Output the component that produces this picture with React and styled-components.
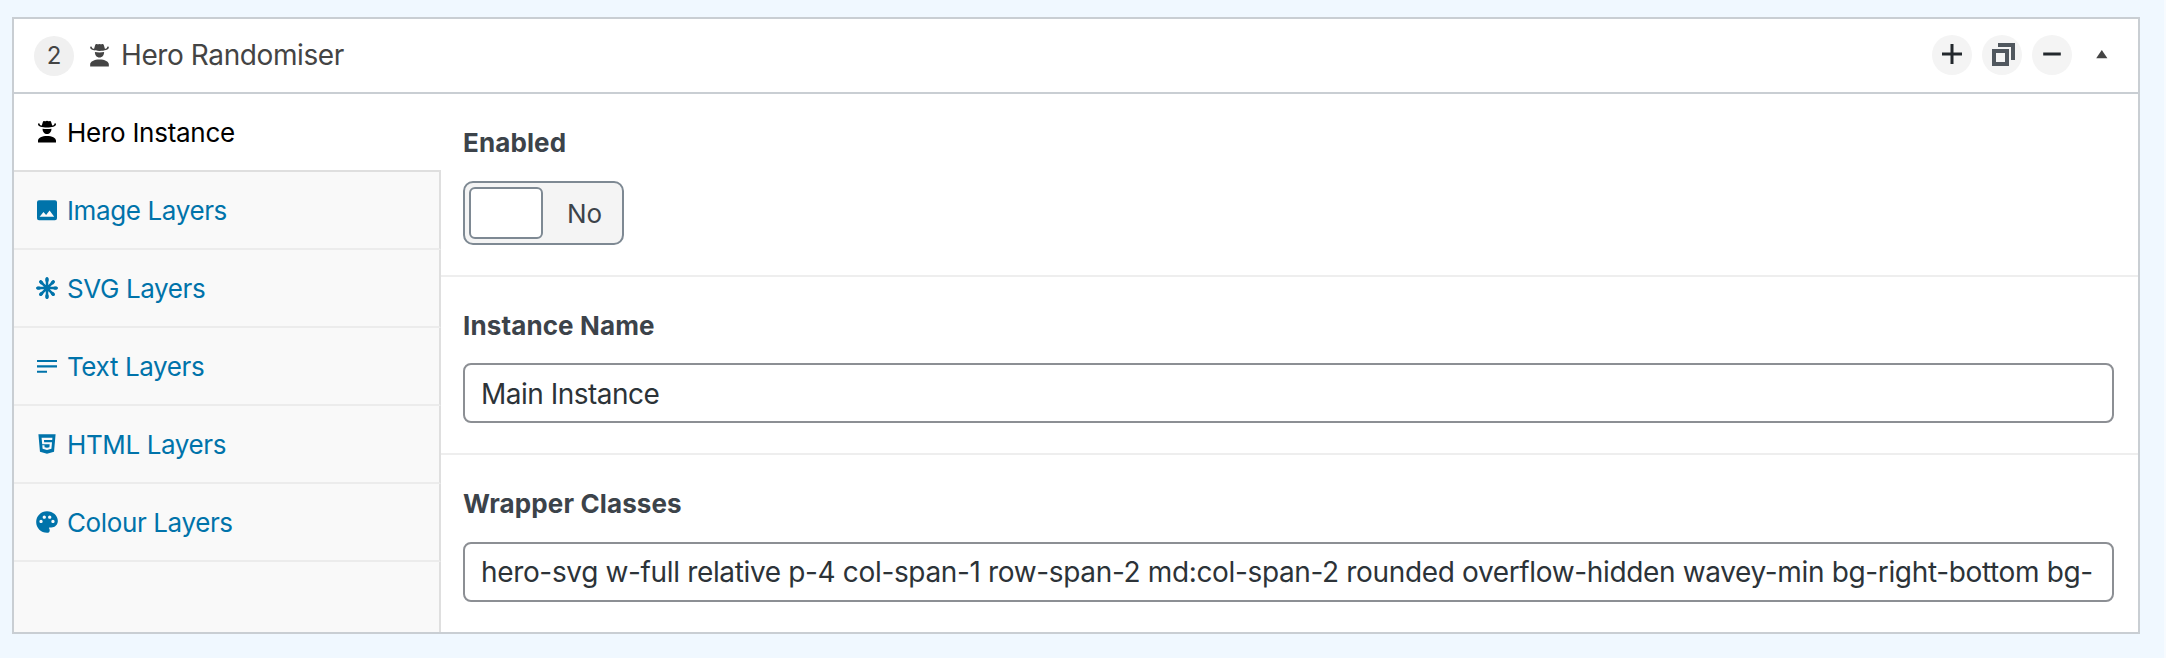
import React from "react";
import styled, { createGlobalStyle } from "styled-components";
import { MdPalette } from "react-icons/md";

const GlobalStyle = createGlobalStyle`
  *, *::before, *::after { box-sizing: border-box; }
  body {
    margin: 0;
    background: #f0f7ff;
    font-family: Inter, "Liberation Sans", sans-serif;
    font-size: 26px;
    color: #3c434a;
  }
`;

const Page = styled.div`
  height: 658px;
  padding: 17px 24px 0 12px;
  background: #f0f8ff;
  border-right: 2px solid #f7fbff;
`;

const Panel = styled.section`
  height: 617px;
  display: flex;
  flex-direction: column;
  background: #fff;
  border: 2px solid #c9ced3;
`;

const Header = styled.header`
  height: 75px;
  flex: none;
  display: flex;
  align-items: flex-start;
  padding: 16px 16px 0 20px;
  border-bottom: 2px solid #c9ced3;
`;

const OrderBadge = styled.span`
  width: 40px;
  height: 40px;
  margin-top: 1px;
  border-radius: 50%;
  background: #f0f0f0;
  color: #444;
  font-size: 24px;
  line-height: 40px;
  text-align: center;
`;

const Title = styled.h2`
  flex: 1;
  display: flex;
  align-items: center;
  gap: 8px;
  margin: 0 0 0 12px;
  font-size: 28px;
  font-weight: 400;
  line-height: 40px;
  letter-spacing: -0.4px;
  color: #444;
`;

const Controls = styled.div`
  display: flex;
  align-items: center;
  gap: 10px;
`;

const RoundButton = styled.button`
  width: 40px;
  height: 40px;
  padding: 0;
  border: 0;
  border-radius: 50%;
  background: #f4f4f4;
  svg { display: block; }
`;

const Collapse = styled(RoundButton)`
  background: transparent;
`;

const Body = styled.div`
  flex: 1;
  display: flex;
`;

const Sidebar = styled.nav`
  width: 427px;
  display: flex;
  flex-direction: column;
`;

const Tab = styled.a`
  height: 78px;
  display: flex;
  align-items: center;
  gap: 7px;
  padding: 0 0 0 20px;
  letter-spacing: ${(p) => (p.$active ? "-0.27px" : "-0.38px")};
  line-height: 36px;
  color: ${(p) => (p.$active ? "#000" : "#0073aa")};
  background: ${(p) => (p.$active ? "#fff" : "#f9f9f9")};
  border-bottom: 2px solid ${(p) => (p.$active ? "#dfdfdf" : "#ececec")};
  border-right: ${(p) => (p.$active ? "0" : "2px solid #dfdfdf")};
  svg { flex: none; }
`;

const TabText = styled.span`
  padding-top: 2px;
`;

const SidebarRest = styled.div`
  flex: 1;
  background: #f9f9f9;
  border-right: 2px solid #dfdfdf;
`;

const Fields = styled.div`
  flex: 1;
  min-width: 0;
`;

const Field = styled.div`
  height: ${(p) => p.$height};
  padding: 31px 24px 0 22px;
  border-bottom: ${(p) => (p.$last ? "0" : "2px solid #eee")};
`;

const Label = styled.label`
  display: block;
  height: 36px;
  margin-bottom: ${(p) => p.$gap || "20px"};
  font-weight: 700;
  line-height: 36px;
  letter-spacing: 0.12px;
`;

const Input = styled.input`
  display: block;
  width: 100%;
  height: 60px;
  padding: ${(p) => p.$nudge || "0"} 16px 0;
  border: 2px solid #8c8f94;
  border-radius: 8px;
  background: #fff;
  color: #2c3338;
  font-family: inherit;
  font-size: 28px;
  letter-spacing: ${(p) => p.$tracking};
  outline: none;
`;

const Switch = styled.div`
  width: 161px;
  height: 64px;
  display: flex;
  align-items: center;
  padding: 0 4px;
  border: 2px solid #7e8993;
  border-radius: 10px;
  background: #f4f4f4;
`;

const Knob = styled.span`
  width: 74px;
  height: 52px;
  border: 2px solid #7e8993;
  border-radius: 6px;
  background: #fff;
`;

const SwitchText = styled.span`
  flex: 1;
  padding: 2px 0 0 8px;
  text-align: center;
  line-height: 36px;
`;

const HeroIcon = ({ size }) => (
  <svg width={size} height={size} viewBox="0 0 24 24" fill="currentColor">
    <path d="M12 15.6c-4.600 0-8.300 1.900-8.300 4.200v2h16.600v-2c0-2.300-3.700-4.200-8.300-4.200z" />
    <path d="M7.900 8.900c0 2.900 1.700 4.900 4.100 4.900s4.100-2 4.100-4.900c-1.200.3-2.600.4-4.100.4s-2.900-.1-4.100-.4z" />
    <path d="M19.500 3.900c-.5 0-.7.300-.7.700 0 .8-.7 1.300-2 1.500L15.900 2.900c-.2-.7-.7-1.100-1.300-1.100-.5 0-.8.300-1.200.3-.5 0-.8-.4-1.400-.4s-.9.400-1.400.4c-.4 0-.7-.3-1.200-.3-.6 0-1.100.4-1.300 1.100L7.200 6.100c-1.300-.2-2-.7-2-1.500 0-.4-.2-.7-.7-.7s-.8.400-.8 1c0 1.900 3.700 3 8.300 3s8.300-1.100 8.300-3c0-.6-.3-1-.8-1z" />
  </svg>
);

const ImageIcon = () => (
  <svg width="26" height="26" viewBox="0 0 26 26" fill="currentColor">
    <path fillRule="evenodd" d="M5 3.200h16a2 2 0 0 1 2 2v16a2 2 0 0 1-2 2H5a2 2 0 0 1-2-2v-16a2 2 0 0 1 2-2zM5.600 19.700h14.600l-4.600-6.300-3.500 4.700-2.600-3z" />
  </svg>
);

const AsteriskIcon = () => (
  <svg width="26" height="26" viewBox="0 0 26 26" fill="none" stroke="currentColor" strokeWidth="2.500" strokeLinecap="round">
    <path d="M13 3.600v19M3.600 13.100h18.800M6.500 6.600l13 13M19.500 6.600l-13 13" />
    <path strokeWidth="3.400" d="M13 4v1.400M13 20.800v1.400M3.900 13.100h1.400M20.700 13.100h1.400M6.800 6.900l.8.8M18.400 18.500l.8.8M19.200 6.900l-.8.8M7.600 18.500l-.8.8" />
  </svg>
);

const LinesIcon = () => (
  <svg width="26" height="26" viewBox="0 0 26 26" fill="currentColor">
    <path d="M3 7h20v2.100H3zM3 12.300h20v2.100H3zM3 17.700h10v2.100H3z" />
  </svg>
);

const HtmlIcon = () => (
  <svg width="26" height="26" viewBox="0 0 24 24" fill="currentColor">
    <path d="M12 17.560L16.070 16.430 16.620 10.330H9.380L9.200 8.300H16.800L17 6.310H7L7.560 12.320H14.450L14.220 14.900 12 15.500 9.780 14.900 9.640 13.240H7.640L7.930 16.430 12 17.560M4.070 3H19.930L18.500 19.200 12 21 5.500 19.200 4.070 3Z" />
  </svg>
);

const PlusIcon = () => (
  <svg width="40" height="40" viewBox="0 0 40 40" fill="#23282d">
    <path d="M18.500 9h3v20h-3zM10 17.500h20v3H10z" />
  </svg>
);

const DuplicateIcon = () => (
  <svg width="40" height="40" viewBox="0 0 40 40" fill="#50575e">
    <path fillRule="evenodd" d="M10 14h17v17H10zM14 18v9h9v-9z" />
    <path d="M16 8h17v17h-4V12H16z" />
  </svg>
);

const MinusIcon = () => (
  <svg width="40" height="40" viewBox="0 0 40 40" fill="#23282d">
    <path d="M11.200 17.500h17.600v3H11.200z" />
  </svg>
);

const CollapseIcon = () => (
  <svg width="40" height="40" viewBox="0 0 40 40" fill="#444">
    <path d="M19.800 15l5.600 8.300H14.200z" />
  </svg>
);

const layers = [
  { label: "Image Layers", icon: <ImageIcon /> },
  { label: "SVG Layers", icon: <AsteriskIcon /> },
  { label: "Text Layers", icon: <LinesIcon /> },
  { label: "HTML Layers", icon: <HtmlIcon /> },
  { label: "Colour Layers", icon: <MdPalette size={26} /> },
];

export default function App() {
  return (
    <>
      <GlobalStyle />
      <Page>
        <Panel>
          <Header>
            <OrderBadge>2</OrderBadge>
            <Title>
              <HeroIcon size={27} />
              <span>Hero Randomiser</span>
            </Title>
            <Controls>
              <RoundButton aria-label="Add row"><PlusIcon /></RoundButton>
              <RoundButton aria-label="Duplicate row"><DuplicateIcon /></RoundButton>
              <RoundButton aria-label="Remove row"><MinusIcon /></RoundButton>
              <Collapse aria-label="Collapse row"><CollapseIcon /></Collapse>
            </Controls>
          </Header>
          <Body>
            <Sidebar>
              <Tab $active>
                <HeroIcon size={26} />
                <TabText>Hero Instance</TabText>
              </Tab>
              {layers.map((layer) => (
                <Tab key={layer.label}>
                  {layer.icon}
                  <TabText>{layer.label}</TabText>
                </Tab>
              ))}
              <SidebarRest />
            </Sidebar>
            <Fields>
              <Field $height="183px">
                <Label>Enabled</Label>
                <Switch role="switch" aria-checked="false">
                  <Knob />
                  <SwitchText>No</SwitchText>
                </Switch>
              </Field>
              <Field $height="178px">
                <Label $gap="19px">Instance Name</Label>
                <Input readOnly $nudge="2px" $tracking="-0.5px" value="Main Instance" />
              </Field>
              <Field $height="177px" $last>
                <Label>Wrapper Classes</Label>
                <Input
                  readOnly
                  $tracking="-0.35px"
                  value="hero-svg w-full relative p-4 col-span-1 row-span-2 md:col-span-2 rounded overflow-hidden wavey-min bg-right-bottom bg-"
                />
              </Field>
            </Fields>
          </Body>
        </Panel>
      </Page>
    </>
  );
}
